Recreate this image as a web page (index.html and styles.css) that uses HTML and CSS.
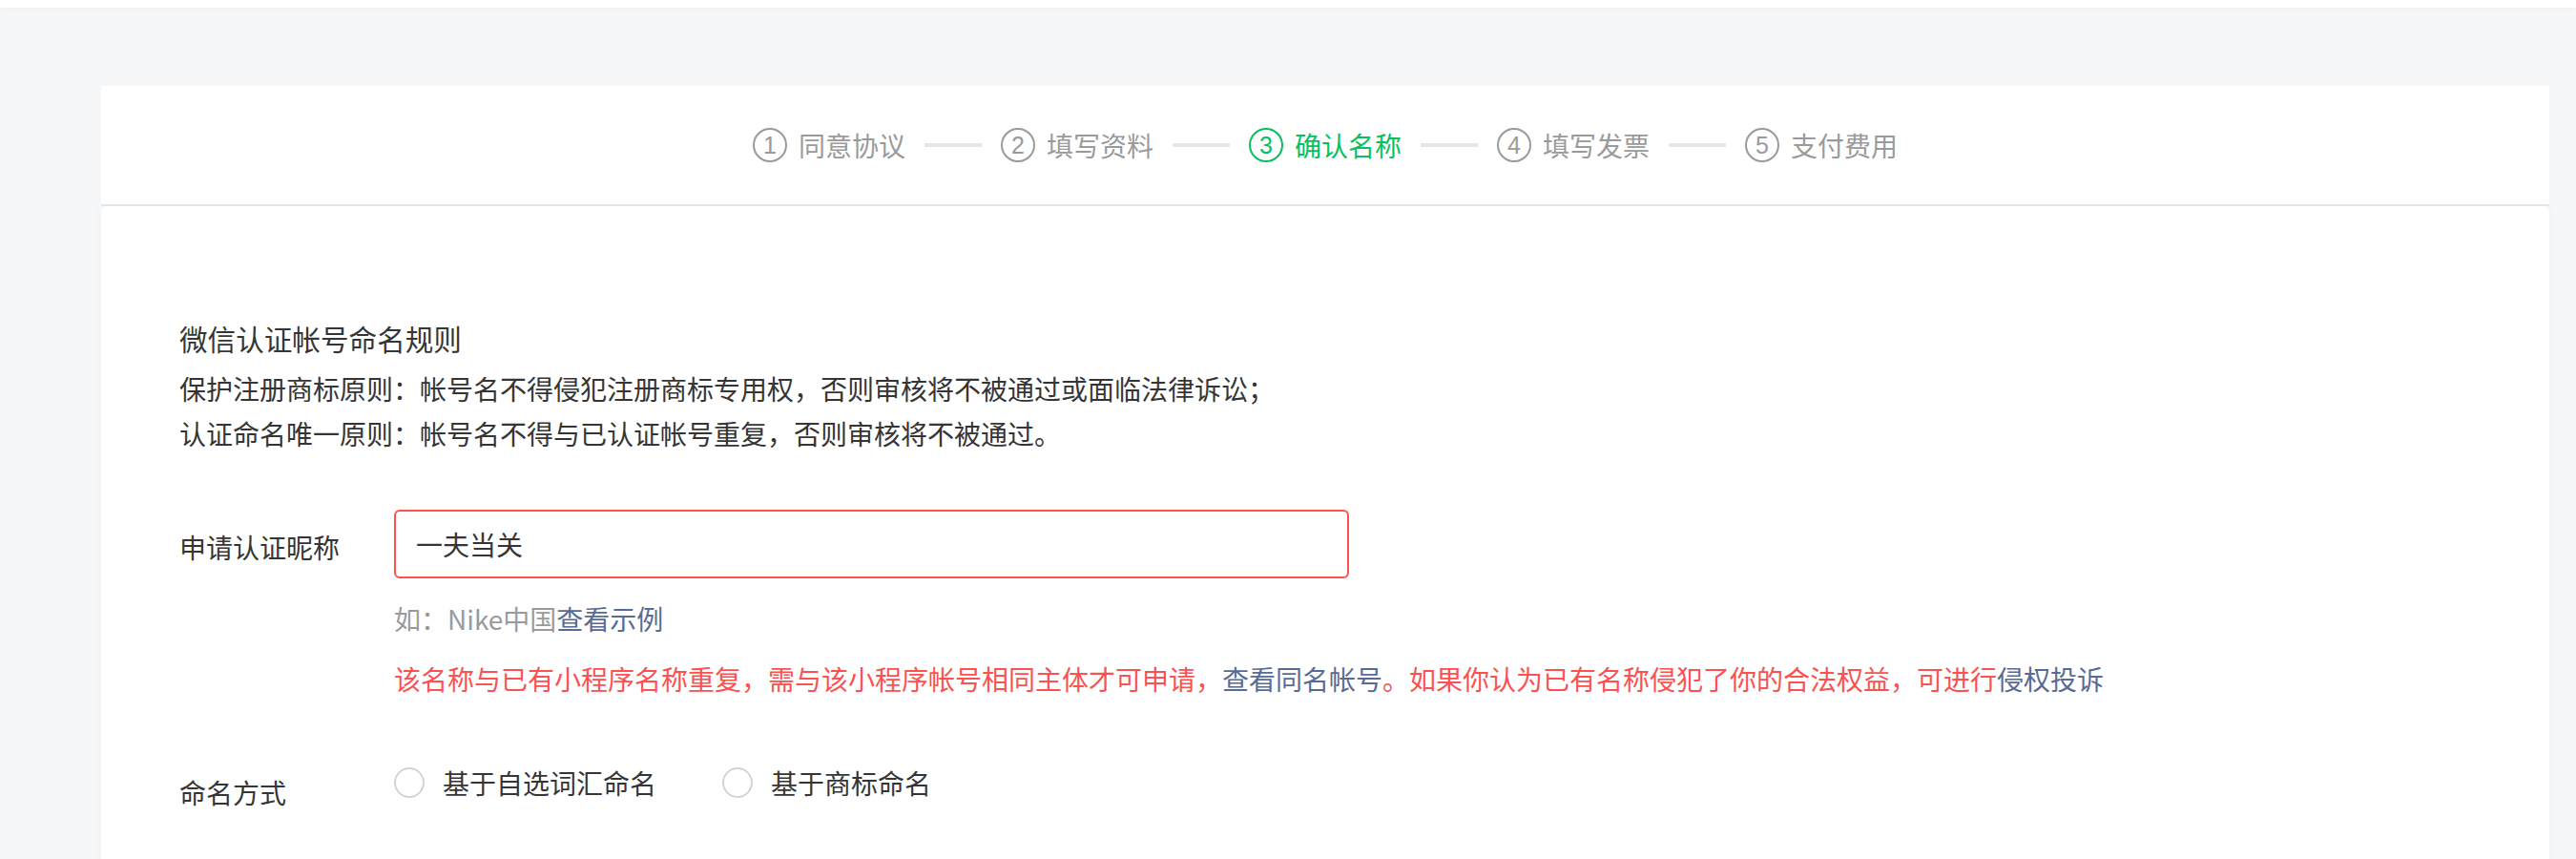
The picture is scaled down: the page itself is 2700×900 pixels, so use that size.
FILE: index.html
```html
<!DOCTYPE html>
<html lang="zh-CN">
<head>
<meta charset="utf-8">
<title>微信认证</title>
<link rel="stylesheet" href="styles.css">
</head>
<body>
<div class="topbar"></div>
<main class="page">
  <div class="card">
    <div class="steps-head">
      <ol class="steps">
        <li class="step"><span class="num">1</span><span class="step-text">同意协议</span></li>
        <li class="sep"></li>
        <li class="step"><span class="num">2</span><span class="step-text">填写资料</span></li>
        <li class="sep"></li>
        <li class="step current"><span class="num">3</span><span class="step-text">确认名称</span></li>
        <li class="sep"></li>
        <li class="step"><span class="num">4</span><span class="step-text">填写发票</span></li>
        <li class="sep"></li>
        <li class="step"><span class="num">5</span><span class="step-text">支付费用</span></li>
      </ol>
    </div>
    <div class="panel">
      <section class="rules">
        <h3 class="rules-title">微信认证帐号命名规则</h3>
        <p class="rule">保护注册商标原则：帐号名不得侵犯注册商标专用权，否则审核将不被通过或面临法律诉讼；</p>
        <p class="rule">认证命名唯一原则：帐号名不得与已认证帐号重复，否则审核将不被通过。</p>
      </section>
      <div class="form-row">
        <label class="form-label">申请认证昵称</label>
        <div class="form-field">
          <div class="input error"><span class="input-value">一夫当关</span></div>
          <p class="hint">如：Nike中国<a class="link">查看示例</a></p>
          <p class="err">该名称与已有小程序名称重复，需与该小程序帐号相同主体才可申请，<a class="link">查看同名帐号</a>。如果你认为已有名称侵犯了你的合法权益，可进行<a class="link">侵权投诉</a></p>
        </div>
      </div>
      <div class="form-row radio-row">
        <label class="form-label">命名方式</label>
        <div class="form-field radios">
          <span class="radio"><i class="radio-dot"></i>基于自选词汇命名</span>
          <span class="radio"><i class="radio-dot"></i>基于商标命名</span>
        </div>
      </div>
    </div>
  </div>
</main>
</body>
</html>
```

FILE: styles.css
```css
* { box-sizing: border-box; }
html, body {
  margin: 0;
  padding: 0;
  height: 100%;
  overflow: hidden;
}
body {
  background: #f6f7f9;
  font-family: "Noto Sans CJK SC", "Noto Sans", sans-serif;
  color: #353535;
  font-size: 28px;
}
.topbar {
  height: 8px;
  background: #ffffff;
  box-shadow: 0 2px 6px rgba(0, 0, 0, 0.03);
  position: relative;
}
.page {
  padding: 82px 28px 0 106px;
}
.card {
  display: flex;
  flex-direction: column;
}
.steps-head {
  background: #fff;
  height: 126px;
  border-bottom: 2px solid #e4e7eb;
  display: flex;
  align-items: center;
  justify-content: center;
}
.steps {
  list-style: none;
  margin: 0;
  padding: 0;
  display: flex;
  align-items: center;
  gap: 20px;
}
.step {
  display: flex;
  align-items: center;
  gap: 12px;
  color: #9a9a9a;
  font-size: 28px;
  line-height: 40px;
}
.step .num {
  width: 36px;
  height: 36px;
  border: 2px solid currentColor;
  border-radius: 50%;
  display: flex;
  align-items: center;
  justify-content: center;
  font-family: "Liberation Sans", sans-serif;
  font-size: 25px;
  line-height: 1;
}
.step.current { color: #07c160; }
.sep {
  width: 60px;
  height: 4px;
  background: #e4e6e9;
  margin: 0;
}
.panel {
  background: #fff;
  border-radius: 6px 6px 0 0;
  box-shadow: 0 0 12px rgba(0, 0, 0, 0.03);
  padding: 115px 82px 80px 82px;
  min-height: 700px;
}
.rules-title {
  margin: 0 0 6px;
  font-size: 29.6px;
  font-weight: 400;
  line-height: 47px;
}
.rule {
  margin: 0;
  line-height: 47px;
}
.form-row {
  display: flex;
  align-items: flex-start;
  margin-top: 56px;
}
.form-label {
  width: 225px;
  flex: none;
  line-height: 40px;
  padding-top: 19px;
}
.form-field {
  display: flex;
  flex-direction: column;
}
.input {
  width: 1001px;
  height: 72px;
  border: 2px solid #fa5151;
  border-radius: 6px;
  padding: 0 21px;
  display: flex;
  align-items: center;
  color: #353535;
}
.hint {
  margin: 22px 0 0;
  line-height: 40px;
  color: #9a9a9a;
}
.link {
  color: #576b95;
  text-decoration: none;
}
.err {
  margin: 23px 0 0;
  line-height: 40px;
  color: #fa5151;
  white-space: nowrap;
}
.radio-row {
  margin-top: 69px;
}
.radio-row .form-label {
  padding-top: 10px;
}
.radios {
  flex-direction: row;
  align-items: center;
  gap: 69px;
  line-height: 40px;
}
.radio {
  display: flex;
  align-items: center;
  gap: 19px;
}
.radio-dot {
  width: 32px;
  height: 32px;
  border: 2px solid #d1d4d9;
  border-radius: 50%;
  display: block;
}
```
